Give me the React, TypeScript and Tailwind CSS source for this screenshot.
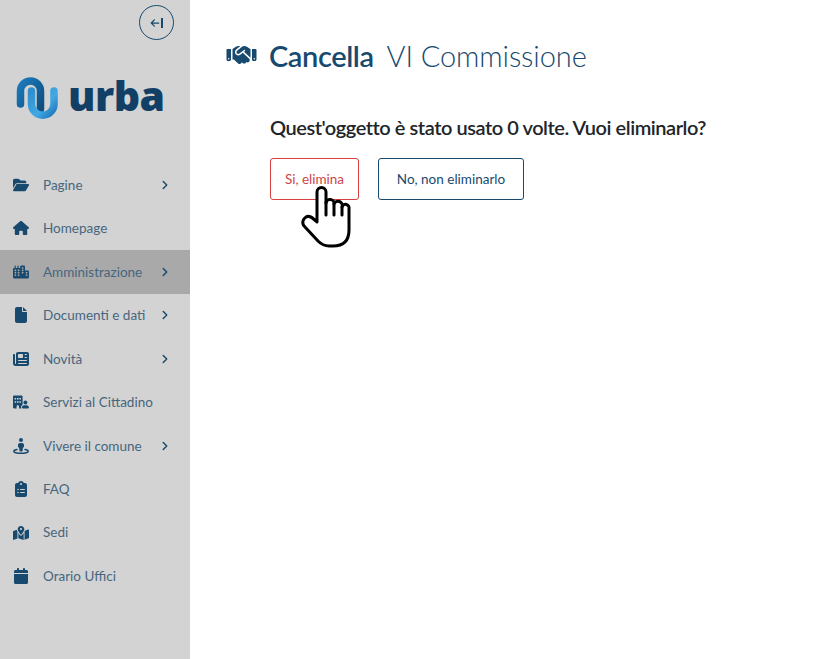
import React from "react";
import { ChevronRight } from "lucide-react";
import {
  FaFolderOpen,
  FaHouse,
  FaCity,
  FaFile,
  FaNewspaper,
  FaBuildingUser,
  FaStreetView,
  FaClipboardList,
  FaMapLocationDot,
  FaCalendar,
  FaHandshake,
  FaArrowLeft,
} from "react-icons/fa6";

const MENU = [
  { label: "Pagine", icon: FaFolderOpen, arrow: true },
  { label: "Homepage", icon: FaHouse },
  { label: "Amministrazione", icon: FaCity, arrow: true, active: true },
  { label: "Documenti e dati", icon: FaFile, arrow: true },
  { label: "Novità", icon: FaNewspaper, arrow: true },
  { label: "Servizi al Cittadino", icon: FaBuildingUser },
  { label: "Vivere il comune", icon: FaStreetView, arrow: true },
  { label: "FAQ", icon: FaClipboardList },
  { label: "Sedi", icon: FaMapLocationDot },
  { label: "Orario Uffici", icon: FaCalendar },
];

function Logo() {
  return (
    <div className="flex items-center gap-[8px] pl-[16px] h-[46px]">
      <svg width="44" height="44" viewBox="0 0 44 44" fill="none">
        <defs>
          <linearGradient id="arch" x1="0" y1="0" x2="1" y2="1">
            <stop offset="0" stopColor="#1b79bb" />
            <stop offset="1" stopColor="#0f4f80" />
          </linearGradient>
          <linearGradient id="cup" x1="0" y1="0" x2="1" y2="1">
            <stop offset="0" stopColor="#2f8fd0" />
            <stop offset="0.6" stopColor="#43a9e4" />
            <stop offset="1" stopColor="#1f78bb" />
          </linearGradient>
        </defs>
        <path d="M4.5 28 V15 A10 10 0 0 1 24.5 15 V33" stroke="url(#arch)" strokeWidth="7.5" strokeLinecap="round" />
        <path d="M15.5 15 V28 A11.2 11.2 0 0 0 38 28 V15" stroke="url(#cup)" strokeWidth="7.5" strokeLinecap="round" />
      </svg>
      <span className="text-[41px] font-extrabold leading-none text-[#123f66] font-['Open_Sans',sans-serif] tracking-[-0.5px] -mt-[6px]">
        urba
      </span>
    </div>
  );
}

function HandCursor() {
  return (
    <svg
      className="absolute left-[30px] top-[26px]"
      width="52"
      height="66"
      viewBox="0 0 52 66"
      fill="#ffffff"
      stroke="#000000"
      strokeWidth="3"
      strokeLinecap="round"
      strokeLinejoin="round"
    >
      <path d="M17 38 V8 A4.5 4.5 0 0 1 26 8 V19 A4 4 0 0 1 34 20 A4 4 0 0 1 42 23 A3.6 3.6 0 0 1 49 25 V46 C49 56 44 62 33 62 H29 C24 62 21 60 18 57 L5 43 C1 39 3 35 6 33 C9 31 12 33 17 38 Z" />
      <path d="M26 18 V31 M34 20 V31 M42 23 V31" fill="none" />
    </svg>
  );
}

export default function App() {
  return (
    <div className="flex w-[829px] h-[659px] bg-white overflow-hidden font-['Lato',sans-serif]">
      <aside className="w-[190px] shrink-0 bg-[#d3d3d3] flex flex-col">
        <div className="flex justify-end pt-[5px] pr-[16px]">
          <button className="w-[35px] h-[35px] rounded-full border border-[#174a6e] flex items-center justify-center text-[#174a6e]">
            <FaArrowLeft className="w-[10px] h-[10px]" />
            <span className="w-[1.5px] h-[10px] bg-[#174a6e] ml-[1px]" />
          </button>
        </div>
        <div className="mt-[35px]">
          <Logo />
        </div>
        <nav className="mt-[42.3px] flex flex-col">
          {MENU.map((m) => {
            const Icon = m.icon;
            return (
              <div
                key={m.label}
                className={`h-[43.44px] flex items-center pl-[13px] pr-[18px] ${m.active ? "bg-[#a9a9a9]" : ""}`}
              >
                <span className="w-[16px] flex justify-center text-[#174a6e]">
                  <Icon className="w-[16px] h-[16px]" />
                </span>
                <span className="ml-[14px] text-[13.5px] text-[#46667f] flex-1 whitespace-nowrap">{m.label}</span>
                {m.arrow && <ChevronRight className="w-[14px] h-[14px] text-[#174a6e]" strokeWidth={2.5} />}
              </div>
            );
          })}
        </nav>
      </aside>

      <main className="flex-1 pl-[36px] pt-[36px]">
        <div className="flex items-center h-[38px]">
          <FaHandshake className="w-[31px] h-[24px] text-[#174a6e]" />
          <h1 className="ml-[12px] text-[29px] font-semibold text-[#174a6e] leading-none tracking-[-0.4px]">Cancella</h1>
          <span className="ml-[13px] text-[29px] font-light text-[#174a6e] leading-none tracking-[-0.1px]">VI Commissione</span>
        </div>
        <div className="pl-[44px]">
          <p className="mt-[39px] text-[20px] font-semibold text-[#212529] leading-[28px] tracking-[-0.45px] whitespace-nowrap">
            Quest'oggetto è stato usato 0 volte. Vuoi eliminarlo?
          </p>
          <div className="mt-[17px] flex gap-[19px]">
            <div className="relative">
              <button className="w-[89px] h-[42px] rounded-[3px] border border-[#d9403f] text-[13.5px] text-[#c9484a]">
                Si, elimina
              </button>
              <HandCursor />
            </div>
            <button className="w-[146px] h-[42px] rounded-[3px] border border-[#174a6e] text-[13.5px] text-[#174a6e]">
              No, non eliminarlo
            </button>
          </div>
        </div>
      </main>
    </div>
  );
}
